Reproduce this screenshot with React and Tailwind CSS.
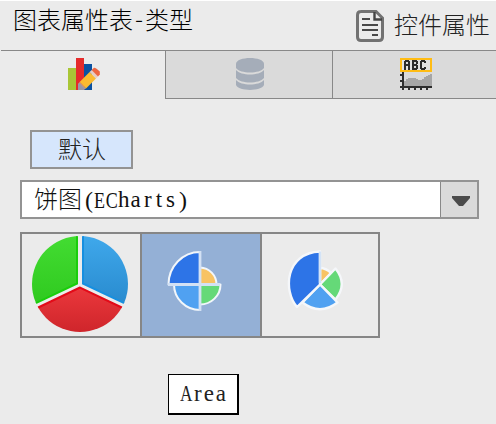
const FONT = "font-['Liberation_Serif','Noto_Sans_CJK_SC',serif]";

function ChartTypeIcon() {
  return (
    <svg width="32" height="32" viewBox="0 0 16 16">
      <g shapeRendering="crispEdges">
        <rect x="0" y="5" width="4" height="11" fill="#a9c636" />
        <rect x="4" y="0" width="4" height="16" fill="#e52b2b" />
        <rect x="8" y="3" width="4" height="13" fill="#0b52a2" />
      </g>
      <path d="M5.8 12L10.8 7L14 10.2L9 15.2z" fill="#fbbb31" />
      <path d="M10.8 7L11.8 6L15 9.2L14 10.2z" fill="#e6cdc4" />
      <path d="M11.8 6L13 4.9Q14 4.8 15.9 6.8V8.2L15 9.2z" fill="#ee6540" />
      <path d="M5.8 12L9 15.2L7.8 16H5V13z" fill="#c99c83" />
      <path d="M5 13L5.8 12.6L8.2 15.2L7.8 16H5z" fill="#9898a7" />
    </svg>
  );
}

function DatabaseIcon() {
  return (
    <svg width="28" height="32" viewBox="0 0 28 32" fill="#a5adb9">
      <path d="M0 6C0-2 28-2 28 6v4C24 16 4 16 0 10z" />
      <path d="M0 12C5 18 23 18 28 12v8C23 26 5 26 0 20z" />
      <path d="M0 22C5 28 23 28 28 22v5C25 33.5 3 33.5 0 27z" />
    </svg>
  );
}

function ChartStyleIcon() {
  return (
    <svg width="32" height="32" viewBox="0 0 16 16" shapeRendering="crispEdges">
      <path d="M2 14v-2.5h1v-1h1v-.5h4v.5h1v.5h2v-.5h1v-1h1v-.5h1v-.5h1v-.5h1v6z" fill="#a6a6a6" />
      <path d="M1 7h1v7h14v1h-2v1h-1v-1h-2v1h-1v-1h-2v1h-1v-1h-2v1h-1v-1h-2v1h-1v-1h-1v-1h1v-2h-1v-1h1v-2h-1v-1h1z" fill="#2d2d2d" />
      <rect x=".5" y=".5" width="15" height="6" fill="#e3e3e3" stroke="#ffbc14" />
      <path d="M2 1.5h.5v-.5h2v.5h.5v4.5h-1v-2h-1v2h-1zM6 1h2.5v.5h.5v1.5h-.5v.5h.5v2h-.5v.5h-2.5zM10.5 1h2v.5h.5v1h-1v-.5h-1v3h1v-.5h1v1h-.5v.5h-2v-.5h-.5v-4h.5z" fill="#2d2d2d" />
      <path d="M3 2h1v1h-1zM7 2h1v1h-1zM7 4h1v1h-1z" fill="#dadada" />
    </svg>
  );
}

function DocumentIcon() {
  return (
    <svg width="28" height="32" viewBox="0 0 28 32" fill="none">
      <path d="M4.5 1.5H20L26.5 8V27q0 3.5-3.5 3.5H5q-3.5 0-3.5-3.5V5q0-3.5 3.5-3.5z" stroke="#727272" strokeWidth="3" />
      <path d="M18.5 2v7.5H26" stroke="#444" strokeWidth="2.4" />
      <path d="M6 9h8M6 15h16M6 20h16M16 25h6" stroke="#484848" strokeWidth="2" />
    </svg>
  );
}

function PieIcon() {
  return (
    <svg width="96" height="96" viewBox="0 0 96 96">
      <defs>
        <clipPath id="disc"><circle cx="48" cy="48" r="48" /></clipPath>
        <linearGradient id="green" x2="0" y2="1"><stop stopColor="#46df35" /><stop offset="1" stopColor="#2fc91f" /></linearGradient>
        <linearGradient id="blue" x2="0" y2="1"><stop stopColor="#43adf0" /><stop offset="1" stopColor="#288ace" /></linearGradient>
        <linearGradient id="red" x2="0" y2="1"><stop stopColor="#eb383c" /><stop offset="1" stopColor="#ca2228" /></linearGradient>
      </defs>
      <g clipPath="url(#disc)" strokeWidth="2">
        <path d="M45-8V47.5L0 69l-9-80z" fill="url(#green)" stroke="#19ce0b" />
        <path d="M51-8V47.5L96 69l9-80z" fill="url(#blue)" stroke="#168fe0" />
        <path d="M48 51.5L1 74v30h94V74z" fill="url(#red)" stroke="#e30a18" />
      </g>
    </svg>
  );
}

function RoseAreaIcon() {
  return (
    <svg width="56" height="64" viewBox="166 249 56 64" stroke="#f2f6fa" strokeWidth="2" strokeLinejoin="round">
      <path d="M200 284.5V267.5A17 17 0 0 1 216.5 284.5z" fill="#f8c363" />
      <path d="M200 284.5H220.5A20.5 20 0 0 1 200 304.5z" fill="#65d978" />
      <path d="M200 284.5V310A26 25.5 0 0 1 174 284.5z" fill="#50a1f1" />
      <path d="M200 284.5H168.5A31.5 32.5 0 0 1 200 252z" fill="#2d74e7" />
      <path d="M200 251V311M168 284.5H220" stroke="#d3e1f4" strokeWidth="2.8" />
    </svg>
  );
}

function RoseRadiusIcon() {
  return (
    <svg width="56" height="64" viewBox="287 249 56 64" stroke="#f5f7fa" strokeWidth="2.4" strokeLinejoin="round">
      <path d="M320 284.5V268Q326 268 331 273z" fill="#f8c363" />
      <path d="M320 284.5L335.5 268.5Q348 284 335.5 299.5z" fill="#65d978" />
      <path d="M320 284.5L337.5 302.5Q320 316 302.5 302.5z" fill="#50a1f1" />
      <path d="M320 284.5L297 307C283 291 285 253 320 251.5z" fill="#2d74e7" />
      <path d="M320 251.5V283" stroke="#d3e3f7" strokeWidth="2.4" />
    </svg>
  );
}

export default function App() {
  return (
    <div className={`flex h-[424px] w-[496px] flex-col overflow-hidden border-t border-white bg-[#ebebeb] text-[24px] leading-6 font-light whitespace-nowrap text-black ${FONT}`}>
      <header className="flex h-[49px] shrink-0 pl-[13px]">
        <h1 className="flex w-[343px] pt-[8px] font-light">
          图表属性表<span className="-mt-[3px] w-3 pl-[2px] font-['Noto_Sans_CJK_SC']">-</span>类型
        </h1>
        <div className="flex text-[#222]">
          <div className="pt-[9px]"><DocumentIcon /></div>
          <span className="pt-[13px] pl-[10px]">控件属性</span>
        </div>
      </header>

      <nav className="ml-px flex h-[49px] shrink-0 border-t border-[#888]">
        <div className="flex w-[164px] justify-center pt-[7px] pl-[2px]"><ChartTypeIcon /></div>
        <div className="flex w-[167px] justify-center border-b border-l border-[#888] bg-[#dadada] pt-[7px] pl-[2px]"><DatabaseIcon /></div>
        <div className="flex flex-1 justify-center border-b border-l border-[#888] bg-[#dadada] pt-[7px] pl-[3px]"><ChartStyleIcon /></div>
      </nav>

      <main className="flex flex-col items-start pl-5">
        <button className="mt-[31px] ml-[10px] flex h-[39px] w-[103px] items-center justify-center border-2 border-[#939393] bg-[#d6e6fc] pl-px text-[#222]">默认</button>

        <div className="mt-[11px] flex h-[39px] w-[459px] border-2 border-[#939393] bg-white">
          <span className="flex flex-1 items-center pl-[12px] text-[#111]">
            饼图
            <span className="w-3 pl-[3px]">(</span>
            <span className="w-6 origin-left scale-x-75 tracking-[1px]">EC</span>
            <span className="w-6 text-[23px] tracking-[1px]">ha</span>
            <span className="w-9 pl-[2px] text-[23px] tracking-[4px]">rts</span>
            <span className="w-3 pl-px">)</span>
          </span>
          <div className="flex w-[37px] items-center justify-center border-l border-[#888] bg-[#dadada] pt-[3px] pl-[4px]">
            <svg width="18" height="10" viewBox="0 0 18 10"><path d="M0 0H18V2L11 10H7L0 2z" fill="#4b4b4b" /></svg>
          </div>
        </div>

        <div className="mt-[13px] flex h-[106px] w-[360px] border-2 border-[#868686]">
          <div className="flex w-[118px] items-center pb-[2px] pl-[10px]"><PieIcon /></div>
          <div className="flex w-[120px] items-start border-l-2 border-[#868686] bg-[#94b0d6] pt-[15px] pl-[24px]"><RoseAreaIcon /></div>
          <div className="flex flex-1 items-start border-l-2 border-[#868686] pt-[15px] pl-[25px]"><RoseRadiusIcon /></div>
        </div>

        <div className="mt-[36px] ml-[148px] flex h-[41px] w-[71px] items-center border-t border-r-2 border-b-2 border-l border-black bg-white pl-[11px] text-[#222]">
          <span className="flex text-[23px]">
            <span className="w-3 origin-left scale-x-75">A</span>
            <span className="pl-[2px] tracking-[2px]">rea</span>
          </span>
        </div>
      </main>
    </div>
  );
}
